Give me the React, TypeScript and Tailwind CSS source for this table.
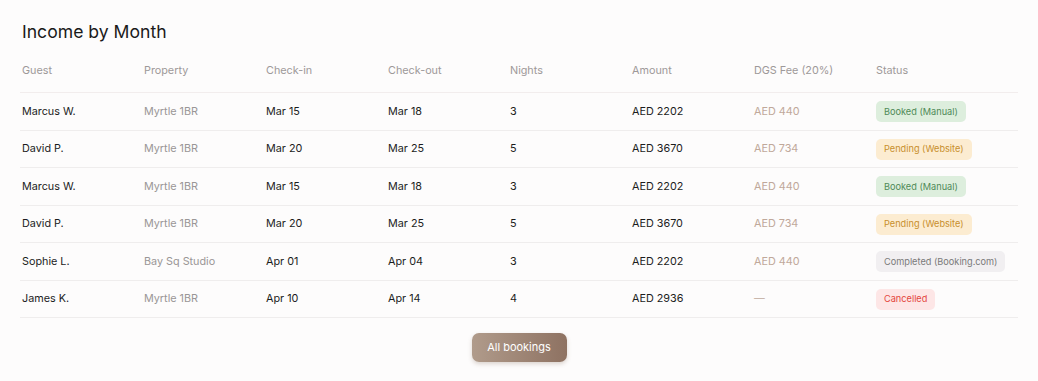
import React from "react";

type Status = "manual" | "website" | "completed" | "cancelled";

const rows: {
  guest: string;
  property: string;
  checkIn: string;
  checkOut: string;
  nights: string;
  amount: string;
  fee: string;
  status: Status;
}[] = [
  { guest: "Marcus W.", property: "Myrtle 1BR", checkIn: "Mar 15", checkOut: "Mar 18", nights: "3", amount: "AED 2202", fee: "AED 440", status: "manual" },
  { guest: "David P.", property: "Myrtle 1BR", checkIn: "Mar 20", checkOut: "Mar 25", nights: "5", amount: "AED 3670", fee: "AED 734", status: "website" },
  { guest: "Marcus W.", property: "Myrtle 1BR", checkIn: "Mar 15", checkOut: "Mar 18", nights: "3", amount: "AED 2202", fee: "AED 440", status: "manual" },
  { guest: "David P.", property: "Myrtle 1BR", checkIn: "Mar 20", checkOut: "Mar 25", nights: "5", amount: "AED 3670", fee: "AED 734", status: "website" },
  { guest: "Sophie L.", property: "Bay Sq Studio", checkIn: "Apr 01", checkOut: "Apr 04", nights: "3", amount: "AED 2202", fee: "AED 440", status: "completed" },
  { guest: "James K.", property: "Myrtle 1BR", checkIn: "Apr 10", checkOut: "Apr 14", nights: "4", amount: "AED 2936", fee: "—", status: "cancelled" },
];

function Badge({ status }: { status: Status }) {
  if (status === "manual")
    return <span className="inline-flex h-[21px] items-center rounded-[5px] bg-[#ddeedd] px-[8px] text-[9.2px] text-[#4f8a58]">Booked (Manual)</span>;
  if (status === "website")
    return <span className="inline-flex h-[21px] items-center rounded-[5px] bg-[#fcecd1] px-[8px] text-[9.2px] text-[#c88f2c]">Pending (Website)</span>;
  if (status === "completed")
    return <span className="inline-flex h-[21px] items-center rounded-[5px] bg-[#f1eff1] px-[8px] text-[9.2px] text-[#7a7a7a]">Completed (Booking.com)</span>;
  return <span className="inline-flex h-[21px] items-center rounded-[5px] bg-[#fde6e6] px-[8px] text-[9.2px] text-[#e4473d]">Cancelled</span>;
}

const grid = "grid grid-cols-[repeat(7,122px)_1fr] pl-[2px]";

export default function App() {
  return (
    <div className="min-h-[381px] w-full bg-[#fdfcfc] px-[20px] pt-[18px] text-[10.8px] text-[#1c1c1c]" style={{ fontFamily: "Inter, 'Noto Sans', sans-serif" }}>
      <h1 className="pl-[2px] text-[17.6px] leading-[28px] font-normal text-[#1a1a1a]">Income by Month</h1>
      <div className={`${grid} border-b border-[#f2eded] pt-[18px] pb-[14px] leading-[14px] text-[#9d9999]`}>
        <div>Guest</div>
        <div>Property</div>
        <div>Check-in</div>
        <div>Check-out</div>
        <div>Nights</div>
        <div>Amount</div>
        <div>DGS Fee (20%)</div>
        <div>Status</div>
      </div>
      {rows.map((r, i) => (
        <div key={i} className={`${grid} h-[37.5px] items-center border-b border-[#efeded] pt-[1px]`}>
          <div className="text-[#1c1c1c]">{r.guest}</div>
          <div className="text-[#9a9696]">{r.property}</div>
          <div>{r.checkIn}</div>
          <div>{r.checkOut}</div>
          <div>{r.nights}</div>
          <div>{r.amount}</div>
          <div className="text-[#c0a89a]">{r.fee}</div>
          <div>
            <Badge status={r.status} />
          </div>
        </div>
      ))}
      <div className="flex justify-center pt-[15px]">
        <button className="h-[29px] w-[95px] rounded-[7px] bg-gradient-to-r from-[#b09b8b] to-[#8e7262] text-[11px] text-white shadow-[0_2px_4px_rgba(120,90,70,0.25)]">
          All bookings
        </button>
      </div>
    </div>
  );
}
